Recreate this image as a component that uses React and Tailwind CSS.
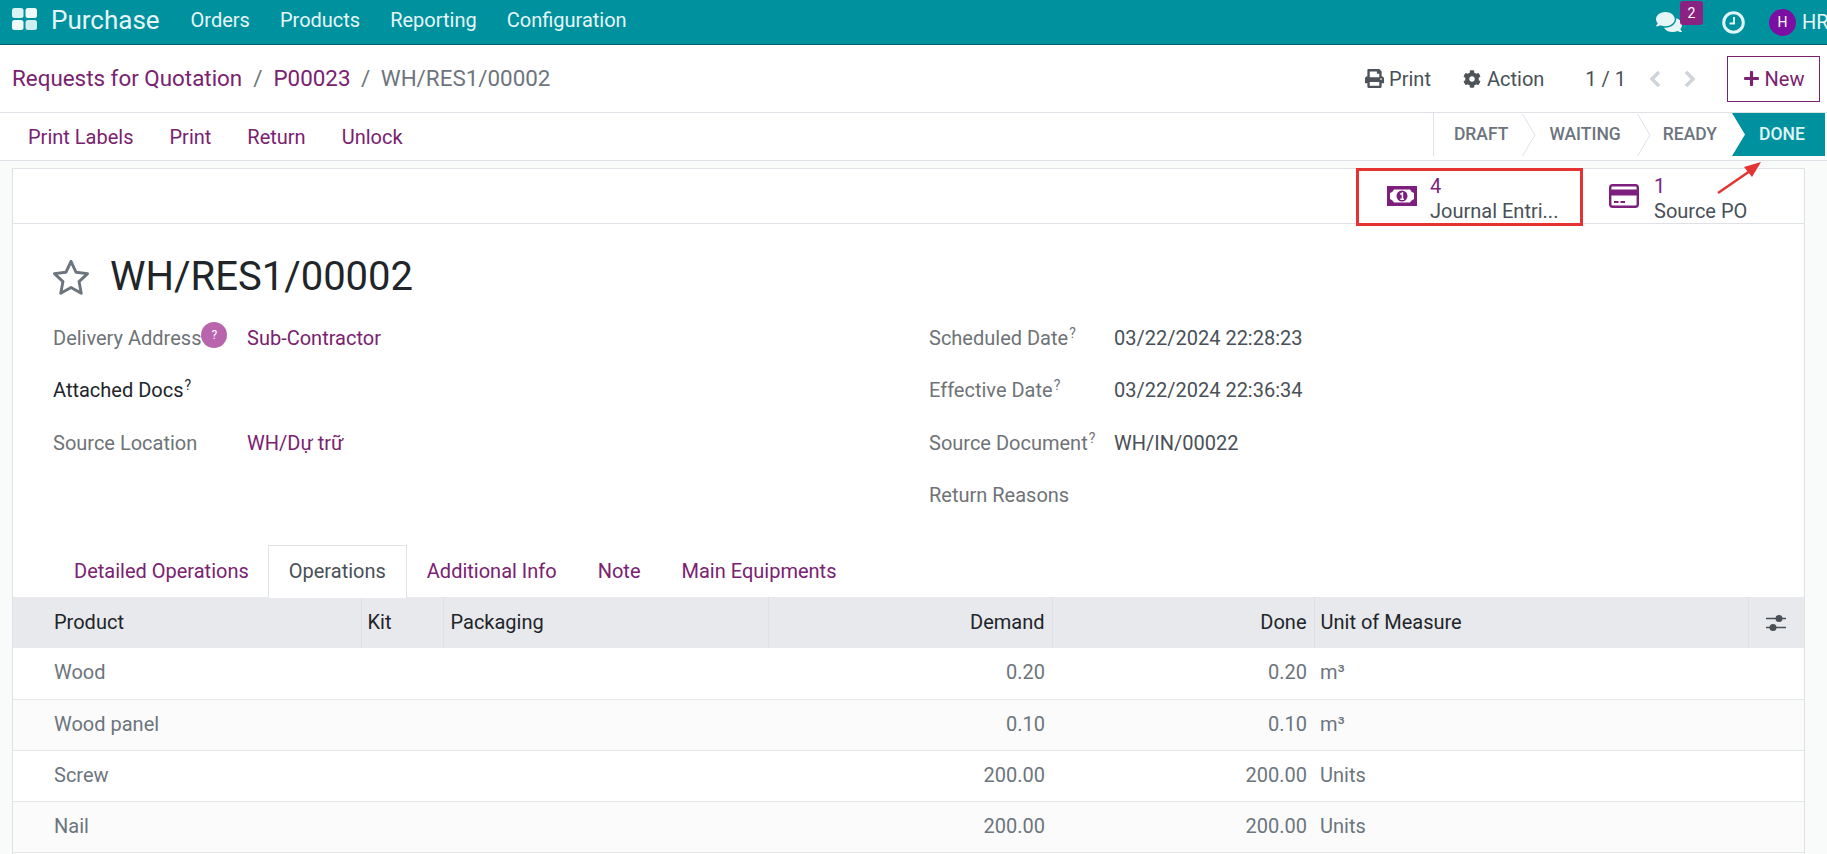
import { FaPrint, FaCog, FaPlus, FaComments } from "react-icons/fa";

const purple = "text-[#7a2170]";

function Sup() {
  return <sup className="text-[14px] ml-px">?</sup>;
}

function Field({ label, value, dark, link, help, badge, right, className = "" }) {
  return (
    <div className={`flex items-center h-[52px] ${className}`}>
      <div className={`shrink-0 whitespace-nowrap ${right ? "w-[185px]" : "w-[194px]"} ${dark ? "text-[#212529]" : "text-[#6f7377]"}`}>
        <span className="relative">
          {label}
          {help && <Sup />}
          {badge && (
            <span className="absolute left-full -top-[4px] flex items-center justify-center w-[26px] h-[26px] rounded-full bg-[#b865ae] text-white text-[12px]">?</span>
          )}
        </span>
      </div>
      <div className={link ? purple : "text-[#495057]"}>{value}</div>
    </div>
  );
}

function Step({ label, first }) {
  return (
    <div className="flex items-center h-full">
      <span className={`font-medium text-[17.5px] text-[#6c757d] ${first ? "pl-[20px] pr-[14px]" : "pl-[13px] pr-[16px]"}`}>{label}</span>
      <svg width="14" height="42" viewBox="0 0 14 42" className="text-[#dee2e6]">
        <path d="M0.5 0 L13 21 L0.5 42" fill="none" stroke="currentColor" />
      </svg>
    </div>
  );
}

function Chevron({ d, className }) {
  return (
    <svg width="14" height="18" viewBox="0 0 14 18" className={className}>
      <path d={d} fill="none" stroke="#ced4da" strokeWidth="3.5" />
    </svg>
  );
}

const rows = [
  ["Wood", "0.20", "0.20", "m³"],
  ["Wood panel", "0.10", "0.10", "m³"],
  ["Screw", "200.00", "200.00", "Units"],
  ["Nail", "200.00", "200.00", "Units"],
];

export default function App() {
  return (
    <div className="h-[854px] w-[1827px] overflow-hidden bg-[#f9fafa] font-['Roboto',sans-serif] text-[20px] leading-normal text-[#495057]">
      {/* navbar */}
      <div className="h-[45px] bg-[#00919f] border-b border-[#05606b] flex items-center pl-[12px] text-[#e6f6f7]">
        <svg width="25" height="22" viewBox="0 0 25 22" className="mr-[14px] -mt-[6px]">
          <rect x="0" y="0" width="11.5" height="10" rx="2.5" fill="#d9f2f4" />
          <rect x="13.5" y="0" width="11.5" height="10" rx="2.5" fill="#eefafa" />
          <rect x="0" y="12" width="11.5" height="10" rx="2.5" fill="#eefafa" />
          <rect x="13.5" y="12" width="11.5" height="10" rx="2.5" fill="#cfeef0" />
        </svg>
        <span className="text-[26px] mr-[31px] -mt-[4px]">Purchase</span>
        <div className="flex gap-[30px] -mt-[4px]">
          <span>Orders</span>
          <span>Products</span>
          <span>Reporting</span>
          <span>Configuration</span>
        </div>
        <div className="ml-auto flex items-center">
          <div className="relative w-[26px] mr-[40px]">
            <FaComments size={26} className="text-[#e6f6f7]" />
            <span className="absolute -top-[8px] left-[24px] w-[23px] h-[24px] rounded-[3px] bg-[#8a2282] text-white text-[14px] flex items-center justify-center">2</span>
          </div>
          <svg width="23" height="23" viewBox="0 0 23 23" className="mr-[24px]">
            <circle cx="11.5" cy="11.5" r="9.8" fill="none" stroke="#e0f5f6" strokeWidth="3" />
            <path d="M12 6 V12.5 H7.5" fill="none" stroke="#e0f5f6" strokeWidth="2" />
          </svg>
          <span className="w-[27px] h-[27px] rounded-full bg-[#7b0fa3] text-white text-[14px] flex items-center justify-center mr-[6px]">H</span>
          <span className="w-[25px] overflow-hidden">HR</span>
        </div>
      </div>

      {/* control panel */}
      <div className="bg-white">
        <div className="h-[68px] border-b border-[#dee2e6] flex items-center pl-[12px] pr-[7px] text-[22.4px]">
          <span className={purple}>Requests for Quotation</span>
          <span className="mx-[11px] text-[#6c757d]">/</span>
          <span className={purple}>P00023</span>
          <span className="mx-[10.5px] text-[#6c757d]">/</span>
          <span className="text-[#6c757d]">WH/RES1/00002</span>
          <div className="ml-auto flex items-center text-[20px]">
            <FaPrint size={19} className="text-[#4d5358] mr-[5px]" />
            <span className="mr-[32px]">Print</span>
            <FaCog size={18} className="text-[#4d5358] mr-[6px]" />
            <span className="mr-[41px]">Action</span>
            <span className="mr-[22px]">1 / 1</span>
            <Chevron d="M11 2 L4 9 L11 16" className="mr-[21px]" />
            <Chevron d="M3 2 L10 9 L3 16" className="mr-[30px]" />
            <div className="w-[93px] h-[46px] border border-[#7a2170] flex items-center justify-center gap-[5px] text-[#7a2170]">
              <FaPlus size={17} />
              New
            </div>
          </div>
        </div>
        <div className="h-[48px] border-b border-[#dee2e6] flex items-center justify-between pl-[12px] pr-[2px]">
          <div className={`flex gap-[36px] pl-[16px] ${purple}`}>
            <span>Print Labels</span>
            <span>Print</span>
            <span>Return</span>
            <span>Unlock</span>
          </div>
          <div className="flex items-center h-[43px] -mt-[4px] border-l border-[#dee2e6]">
            <Step label="DRAFT" first />
            <Step label="WAITING" />
            <div className="font-medium text-[17.5px] text-[#6c757d] pl-[12px] pr-[15px]">READY</div>
            <div className="relative w-[93px] h-full flex items-center pl-[27px] font-medium text-[17.5px] text-[#e0f5f6]">
              <svg width="93" height="43" viewBox="0 0 93 43" className="absolute inset-0" preserveAspectRatio="none">
                <path d="M0 0 H93 V43 H0 L13 21.5 Z" fill="#00919f" />
              </svg>
              <span className="relative">DONE</span>
            </div>
          </div>
        </div>
      </div>

      {/* sheet */}
      <div className="relative ml-[12px] mt-[7px] w-[1793px] h-[700px] bg-white border border-[#dee2e6]">
        <div className="h-[55px] border-b border-[#dee2e6] flex justify-end">
          <div className="w-[192px] mr-[59px] flex items-center shrink-0">
            <svg width="30" height="20" viewBox="0 0 30 20" className="ml-[29px] mr-[13px] text-[#7d1f7c] shrink-0">
              <path fillRule="evenodd" d="M0 0H30V20H0Z M7 3.5 H23 Q24 6 27 7 V13 Q24 14 23 16.5 H7 Q6 14 3 13 V7 Q6 6 7 3.5Z" fill="currentColor" />
              <circle cx="15" cy="10" r="5.5" fill="currentColor" />
              <path d="M13.3 8.3 L15.4 7 V13 M13.3 13.2 H17" stroke="#fff" strokeWidth="1.5" fill="none" />
            </svg>
            <div className="leading-[25px] whitespace-nowrap pt-[6px]">
              <div className="text-[#7d1f7c]">4</div>
              <div className="text-[#495057]">Journal Entri...</div>
            </div>
          </div>
          <div className="w-[195px] flex items-center shrink-0">
            <svg width="30" height="24" viewBox="0 0 30 24" className="mr-[15px] text-[#7d1f7c] shrink-0">
              <rect x="1.2" y="1.2" width="27.6" height="21.6" rx="2.5" fill="none" stroke="currentColor" strokeWidth="2.4" />
              <rect x="1" y="5.5" width="28" height="6" fill="currentColor" />
              <path d="M5 18H9.5 M11.5 18H16" stroke="currentColor" strokeWidth="2" />
            </svg>
            <div className="leading-[25px] whitespace-nowrap pt-[6px]">
              <div className="text-[#7d1f7c]">1</div>
              <div className="text-[#495057]">Source PO</div>
            </div>
          </div>
        </div>

        {/* red markup over the screenshot */}
        <div className="absolute left-[1343px] -top-px w-[227px] h-[58px] border-[3px] border-[#e53333]" />
        <svg width="50" height="40" viewBox="0 0 50 40" className="absolute left-[1701px] -top-[8px] overflow-visible">
          <path d="M4 32 L36 10" stroke="#e53333" strokeWidth="2.5" fill="none" />
          <path d="M47 1 L30 6 L38 16 Z" fill="#e53333" />
        </svg>

        <div className="pl-[40px] pr-[40px]">
          <div className="flex items-center h-[89px] pt-[17px]">
            <svg width="42" height="41" viewBox="0 0 24 24" className="text-[#6c757d] -ml-[3px] mr-[18px]">
              <path d="M12 2.6 L14.9 8.9 L21.7 9.7 L16.7 14.4 L18 21.2 L12 17.8 L6 21.2 L7.3 14.4 L2.3 9.7 L9.1 8.9 Z" fill="none" stroke="currentColor" strokeWidth="1.7" strokeLinejoin="round" />
            </svg>
            <h1 className="text-[40px] leading-none text-[#212529]">WH/RES1/00002</h1>
          </div>
          <div className="grid grid-cols-[876px_1fr] -mt-[1px]">
            <div>
              <Field label="Delivery Address" value="Sub-Contractor" link badge />
              <Field label="Attached Docs" dark help />
              <Field label="Source Location" value="WH/Dự trữ" link className="mt-px" />
            </div>
            <div>
              <Field right label="Scheduled Date" value="03/22/2024 22:28:23" help />
              <Field right label="Effective Date" value="03/22/2024 22:36:34" help />
              <Field right label="Source Document" value="WH/IN/00022" help className="mt-px" />
              <Field right label="Return Reasons" />
            </div>
          </div>
        </div>

        {/* tabs */}
        <div className="flex items-end h-[52px] mt-[25px] pl-[41px] -mb-px relative">
          <span className={`pl-[20px] pr-[19px] pb-[2px] h-[52px] flex items-center ${purple}`}>Detailed Operations</span>
          <span className="px-[20px] pb-[2px] h-[53px] flex items-center bg-white border border-b-0 border-[#dee2e6] text-[#495057]">Operations</span>
          <span className={`pl-[20px] pr-[21px] pb-[2px] h-[52px] flex items-center ${purple}`}>Additional Info</span>
          <span className={`pl-[20px] pr-[21px] pb-[2px] h-[52px] flex items-center ${purple}`}>Note</span>
          <span className={`px-[20px] pb-[2px] h-[52px] flex items-center ${purple}`}>Main Equipments</span>
        </div>

        {/* table */}
        <table className="w-full table-fixed border-collapse">
          <colgroup>
            <col className="w-[348px]" />
            <col className="w-[82px]" />
            <col className="w-[325px]" />
            <col className="w-[284px]" />
            <col className="w-[262px]" />
            <col className="w-[434px]" />
            <col />
          </colgroup>
          <thead>
            <tr className="h-[51px] bg-[#e7e9ec] text-[#212529]">
              <th className="font-normal text-left pl-[41px] pb-[2px] border-r border-[#dee2e6]">Product</th>
              <th className="font-normal text-left pl-[6px] pb-[2px] border-r border-[#dee2e6]">Kit</th>
              <th className="font-normal text-left pl-[7px] pb-[2px] border-r border-[#dee2e6]">Packaging</th>
              <th className="font-normal text-right pr-[7px] pb-[2px] border-r border-[#dee2e6]">Demand</th>
              <th className="font-normal text-right pr-[7px] pb-[2px] border-r border-[#dee2e6]">Done</th>
              <th className="font-normal text-left pl-[6px] pb-[2px] border-r border-[#dee2e6]">Unit of Measure</th>
              <th className="font-normal">
                <svg width="20" height="18" viewBox="0 0 20 18" className="mx-auto text-[#495057]">
                  <path d="M0 4.5H20 M0 13.5H20" stroke="currentColor" strokeWidth="1.5" />
                  <circle cx="13" cy="4.5" r="3.5" fill="currentColor" />
                  <circle cx="7" cy="13.5" r="3.5" fill="currentColor" />
                </svg>
              </th>
            </tr>
          </thead>
          <tbody>
            {rows.map((r, i) => (
              <tr key={r[0]} className={`h-[51px] border-b border-[#e5e7ea] ${i % 2 ? "bg-[#fbfbfb]" : "bg-white"} text-[#6c757d]`}>
                <td className="pl-[41px] pb-[2px]">{r[0]}</td>
                <td />
                <td />
                <td className="text-right pr-[7px] pb-[2px]">{r[1]}</td>
                <td className="text-right pr-[7px] pb-[2px]">{r[2]}</td>
                <td className="pl-[6px] pb-[2px]">{r[3]}</td>
                <td />
              </tr>
            ))}
          </tbody>
        </table>
      </div>
    </div>
  );
}
